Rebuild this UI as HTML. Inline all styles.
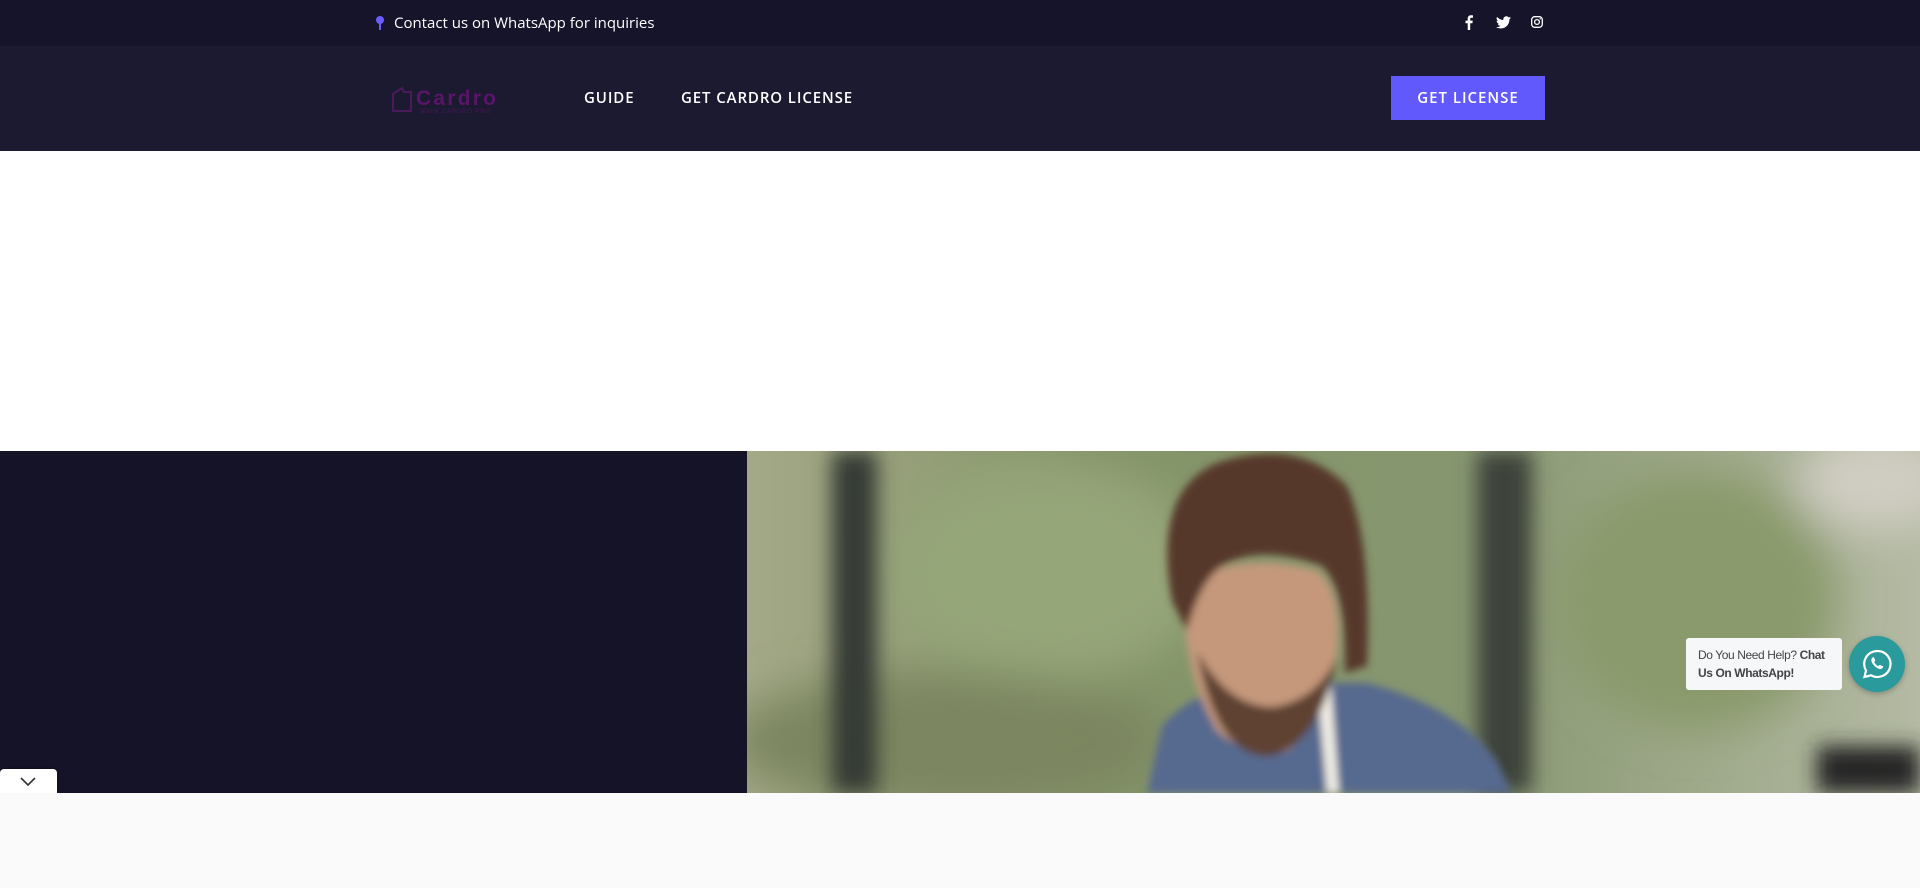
<!DOCTYPE html>
<html><head><meta charset="utf-8"><style>
*{margin:0;padding:0;box-sizing:border-box}
body{width:1920px;height:888px;overflow:hidden;background:#fafafa;font-family:"Open Sans","Liberation Sans",sans-serif;position:relative}
.top{position:absolute;left:0;top:0;width:1920px;height:46px;background:#15142a}
.nav{position:absolute;left:0;top:46px;width:1920px;height:105px;background:#1b1a31}
.white{position:absolute;left:0;top:151px;width:1920px;height:300px;background:#fff}
.dark{position:absolute;left:0;top:451px;width:747px;height:342px;background:#141327}
.photo{position:absolute;left:747px;top:451px;width:1173px;height:342px;overflow:hidden}
.t{position:absolute;color:#fff}
.menu{font-size:15px;font-weight:600;letter-spacing:0.9px;top:88px;color:#fff;position:absolute}
</style></head><body>
<div class="top"></div>
<svg style="position:absolute;left:375px;top:15px" width="10" height="16"><circle cx="5" cy="5" r="4" fill="#6a5cff"/><rect x="4" y="7" width="2" height="8" fill="#6a5cff"/></svg>
<div class="t" style="left:394px;top:13px;font-size:15px">Contact us on WhatsApp for inquiries</div>
<svg style="position:absolute;left:1465px;top:15px" width="8" height="15" viewBox="0 0 8 15"><path d="M5.2 15V8.2h2.2l.3-2.6H5.2V4c0-.8.2-1.3 1.3-1.3H8V.4C7.700.3 6.900.2 6 .2 4 .2 2.700 1.400 2.700 3.600v2H.5v2.600h2.200V15z" fill="#fff"/></svg>
<svg style="position:absolute;left:1496px;top:16px" width="15" height="13" viewBox="0 0 24 20"><path d="M24 2.4a10 10 0 0 1-2.8.8A5 5 0 0 0 23.3.5a10 10 0 0 1-3.1 1.2A4.9 4.9 0 0 0 11.8 6 14 14 0 0 1 1.7.9a4.9 4.9 0 0 0 1.5 6.6A5 5 0 0 1 1 6.9a4.9 4.9 0 0 0 3.9 4.9 5 5 0 0 1-2.2.1 4.9 4.9 0 0 0 4.6 3.4A9.9 9.9 0 0 1 0 17.3 14 14 0 0 0 7.5 19.5c9 0 14-7.5 14-14v-.6A10 10 0 0 0 24 2.4z" fill="#fff"/></svg>
<svg style="position:absolute;left:1531px;top:16px" width="12" height="12" viewBox="0 0 12 12"><rect x=".7" y=".7" width="10.6" height="10.6" rx="3" fill="none" stroke="#fff" stroke-width="1.3"/><circle cx="6" cy="6" r="2.4" fill="none" stroke="#fff" stroke-width="1.3"/><circle cx="9.2" cy="2.8" r=".7" fill="#fff"/></svg>
<div class="nav"></div>
<svg style="position:absolute;left:390px;top:84px" width="112" height="32" viewBox="0 0 112 32"><path d="M3 10 L12 4 L14 8 L21 8 L21 27 L3 27 Z" fill="none" stroke="#4a1a5a" stroke-width="2"/><text x="26" y="21" font-family="Liberation Sans" font-weight="bold" font-size="21" fill="#5a1468" textLength="80">Cardro</text><text x="30" y="29" font-family="Liberation Sans" font-size="6" fill="#4a1858" textLength="70">WWW.CARDRO.PRO</text></svg>
<div class="menu" style="left:584px">GUIDE</div>
<div class="menu" style="left:681px">GET CARDRO LICENSE</div>
<div style="position:absolute;left:1391px;top:76px;width:154px;height:44px;background:#6159fb;color:#fff;font-size:15px;font-weight:600;letter-spacing:1px;text-align:center;line-height:44px">GET LICENSE</div>
<div class="white"></div>
<div class="dark"></div>
<div class="photo">
<svg width="1173" height="342" viewBox="0 0 1173 342">
<defs>
<filter id="b" x="-20%" y="-20%" width="140%" height="140%"><feGaussianBlur stdDeviation="22"/></filter>
<filter id="s"><feGaussianBlur stdDeviation="4"/></filter>
<filter id="s2"><feGaussianBlur stdDeviation="10"/></filter>
<linearGradient id="bg" x1="0" x2="1"><stop offset="0" stop-color="#a4a887"/><stop offset=".3" stop-color="#849468"/><stop offset=".6" stop-color="#86966f"/><stop offset="1" stop-color="#b4baa3"/></linearGradient>
</defs>
<rect width="1173" height="342" fill="url(#bg)"/>
<g filter="url(#b)">
<ellipse cx="300" cy="120" rx="160" ry="110" fill="#95a679"/>
<ellipse cx="950" cy="150" rx="140" ry="130" fill="#8a9a6c"/>
<ellipse cx="1130" cy="30" rx="80" ry="50" fill="#d0cdc2"/>
<ellipse cx="200" cy="290" rx="220" ry="70" fill="#7b8660"/>
</g>
<g filter="url(#s2)">
<rect x="85" y="0" width="45" height="342" fill="#363b34"/>
<rect x="730" y="0" width="55" height="342" fill="#3e433b"/>
<rect x="1070" y="295" width="103" height="47" fill="#262828"/>
</g>
<g filter="url(#s)">
<path d="M400 342 L415 275 Q445 240 500 232 L620 232 Q710 255 750 310 L765 342 Z" fill="#56698f"/>
<path d="M570 232 L580 342 L592 342 L584 234Z" fill="#efece4"/>
<path d="M440 130 Q430 210 470 280 Q505 310 540 300 Q580 270 590 200 Q595 140 570 120 Q500 100 440 130Z" fill="#c5987c"/>
<path d="M450 200 Q470 310 525 305 Q575 290 590 205 Q570 250 525 256 Q480 255 450 200Z" fill="#5f4230"/>
<path d="M425 150 Q405 40 470 12 Q550 -15 600 35 Q625 90 620 215 L598 222 Q600 140 575 115 Q520 95 485 110 Q455 120 440 180 Z" fill="#56382a"/>
</g>
</svg>
</div>
<div style="position:absolute;left:0;top:769px;width:57px;height:24px;background:#fff;border-radius:4px 4px 0 0;box-shadow:0 0 3px rgba(0,0,0,.2)"></div>
<svg style="position:absolute;left:20px;top:777px" width="16" height="10"><path d="M1 1 L8 8 L15 1" fill="none" stroke="#333" stroke-width="1.6"/></svg>
<div style="position:absolute;left:0;top:793px;width:1920px;height:95px;background:#fafafa"></div>
<div style="position:absolute;left:1686px;top:638px;width:156px;height:52px;background:#f5f7f9;border-radius:3px;font-family:'Liberation Sans',sans-serif;font-size:12px;letter-spacing:-0.4px;color:#444;padding:8px 8px 8px 12px;line-height:18px">Do You Need Help? <b>Chat Us On WhatsApp!</b></div>
<div style="position:absolute;left:1849px;top:636px;width:56px;height:56px;border-radius:50%;background:#2a9a9d;box-shadow:0 2px 6px rgba(0,0,0,.25)"></div>
<svg style="position:absolute;left:1861px;top:648px" width="32" height="32" viewBox="0 0 32 32"><path d="M16 3a13 13 0 0 0-11 19.6L3.5 29l6.6-1.7A13 13 0 1 0 16 3z" fill="none" stroke="#fff" stroke-width="2.2"/><path d="M11.5 9.5c.5-.5 1.2-.5 1.5 0l1.2 2.5c.2.5 0 1-.4 1.4l-.6.6c.8 1.8 2.3 3.3 4.1 4.1l.6-.6c.4-.4.9-.6 1.4-.4l2.5 1.2c.5.3.5 1 0 1.5-1 1.2-2.5 1.6-4 1-3.5-1.4-6-4-7.3-7.4-.5-1.5 0-2.9 1-3.9z" fill="#fff"/></svg>
</body></html>
